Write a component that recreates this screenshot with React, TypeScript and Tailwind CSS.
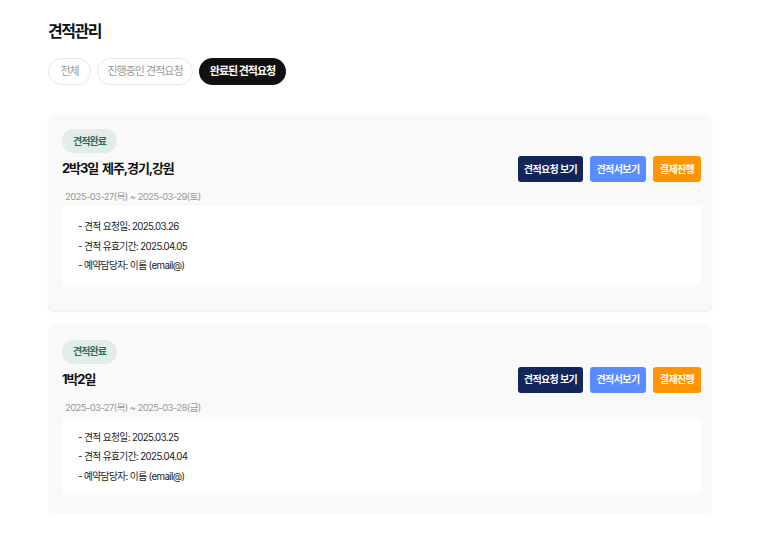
import React from "react";

const font = { fontFamily: 'Inter, "Noto Sans CJK KR", "Noto Sans", sans-serif' };

type Q = { title: string; date: string; req: string; valid: string; last?: boolean };

function Card({ q }: { q: Q }) {
  return (
    <div
      className={`bg-[#f9f9f9] rounded-[6px] pl-[14px] pr-[11px] pt-[16px] ${
        q.last ? "pb-[19px]" : "pb-[25px] shadow-[0_2px_2px_rgba(0,0,0,0.06)]"
      }`}
    >
      <div className="flex">
        <span className="h-[24px] w-[55px] justify-center rounded-full bg-[#e2ece9] text-[#2d6b5f] text-[10px] font-bold flex items-center tracking-[-1px]">
          견적완료
        </span>
      </div>
      <div className="flex items-center justify-between mt-[3px] h-[26px]">
        <div className="text-[13px] font-bold text-[#111] tracking-[-1.1px] [word-spacing:2px]">{q.title}</div>
        <div className="flex gap-[7px]">
          <button className="h-[26px] w-[65px] rounded-[3px] bg-[#13265a] text-white text-[10px] font-bold tracking-[-0.6px]">
            견적요청 보기
          </button>
          <button className="h-[26px] w-[56px] rounded-[3px] bg-[#5b8cff] text-white text-[10px] font-bold tracking-[-0.6px]">
            견적서보기
          </button>
          <button className="h-[26px] w-[48px] rounded-[3px] bg-[#ff9500] text-white text-[10px] font-bold tracking-[-0.6px]">
            결제진행
          </button>
        </div>
      </div>
      <div className="mt-[8px] pl-[3px] text-[9.5px] leading-[14px] text-[#999] tracking-[-0.6px]">{q.date}</div>
      <div className="mt-[2px] bg-white rounded-[4px] pl-[16px] pt-[11px] pb-[9px] text-[9.7px] text-[#222] leading-[19.5px] tracking-[-0.6px]">
        <div>- 견적 요청일: {q.req}</div>
        <div>- 견적 유효기간: {q.valid}</div>
        <div>- 예약담당자: 이름 (email@)</div>
      </div>
    </div>
  );
}

export default function App() {
  const items: Q[] = [
    { title: "2박3일 제주,경기,강원", date: "2025-03-27(목) ~ 2025-03-29(토)", req: "2025.03.26", valid: "2025.04.05" },
    { title: "1박2일", date: "2025-03-27(목) ~ 2025-03-28(금)", req: "2025.03.25", valid: "2025.04.04", last: true },
  ];
  return (
    <div style={font} className="w-[760px] h-[540px] bg-white pl-[48px] pr-[48px] pt-[20px]">
      <h1 className="text-[16px] font-bold text-[#111] leading-[22px] tracking-[-1.5px]">견적관리</h1>
      <div className="flex gap-[6px] mt-[16px]">
        <button className="h-[27px] w-[43px] rounded-full border border-[#e6e6e6] text-[11px] text-[#999] tracking-[-1px]">전체</button>
        <button className="h-[27px] w-[96px] rounded-full border border-[#e6e6e6] text-[11px] text-[#999] tracking-[-1px]">
          진행중인 견적요청
        </button>
        <button className="h-[27px] w-[87px] rounded-full bg-[#111] text-[11px] text-white font-bold tracking-[-1px]">
          완료된 견적요청
        </button>
      </div>
      <div className="mt-[28px] flex flex-col gap-[14px]">
        {items.map((q) => (
          <Card key={q.title} q={q} />
        ))}
      </div>
    </div>
  );
}
